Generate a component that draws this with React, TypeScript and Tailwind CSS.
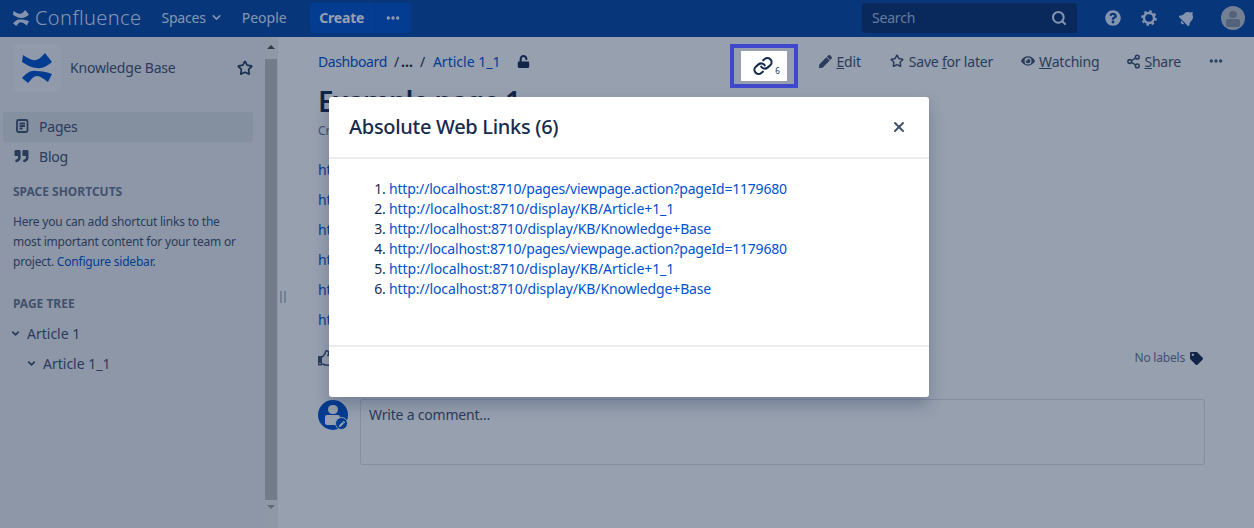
import { ChevronDown, Ellipsis, Link, Search, Share2, Star, X } from "lucide-react";
import { FaBell, FaEye, FaPen, FaQuestionCircle, FaQuoteRight, FaRegThumbsUp, FaTag, FaUnlock } from "react-icons/fa";

const font = "font-['Noto_Sans',sans-serif]";

const links = [
  { href: "http://localhost:8710/pages/viewpage.action?pageId=1179680", fit: "tracking-[-0.2px]" },
  { href: "http://localhost:8710/display/KB/Article+1_1", fit: "tracking-[-0.06px]" },
  { href: "http://localhost:8710/display/KB/Knowledge+Base", fit: "tracking-[-0.14px]" },
  { href: "http://localhost:8710/pages/viewpage.action?pageId=1179680", fit: "tracking-[-0.2px]" },
  { href: "http://localhost:8710/display/KB/Article+1_1", fit: "tracking-[-0.06px]" },
  { href: "http://localhost:8710/display/KB/Knowledge+Base", fit: "tracking-[-0.14px]" },
];

const Logo = ({ className }: { className: string }) => (
  <svg viewBox="0 0 30 30" className={className} fill="currentColor">
    <path d="M1 2C6 5 10 8 14 7C18 6 20 3 23 0L30 9C25 13 20 16 15 15C10 15 5 12 0 9Z" />
    <path d="M0 25C4 21 8 17 14 18C20 18 25 19 30 21L26 29C22 26 18 23 15 23C11 23 9 27 6 30Z" />
  </svg>
);

const PageIcon = () => (
  <svg viewBox="0 0 16 16" className="h-[16px] w-[16px]" fill="none" stroke="currentColor" strokeWidth="1.8">
    <rect x="3" y="2" width="10.500" height="12" rx="1.500" />
    <path d="M5.500 5.500h5.500M5.500 8h5.500M5.500 10.500h3" />
  </svg>
);

const GearIcon = () => (
  <svg viewBox="0 0 16 16" className="h-[16px] w-[16px]" fill="none" stroke="currentColor">
    <circle cx="8" cy="8" r="5" strokeWidth="2.400" />
    <circle cx="8" cy="8" r="6.800" strokeWidth="2" strokeDasharray="2.600 2.740" />
  </svg>
);

const Avatar = () => (
  <div className="relative h-[24px] w-[24px] overflow-hidden rounded-full bg-[#c1c7d0]">
    <div className="absolute left-[8px] top-[5px] h-[7px] w-[8px] rounded-full bg-[#8993a4]" />
    <div className="absolute left-[5px] top-[13px] h-[8px] w-[14px] rounded-[2px] bg-[#8993a4]" />
  </div>
);

const ToolbarItem = ({ icon, before, key_, after, className }: { icon: React.ReactNode; before?: string; key_: string; after: string; className: string }) => (
  <div className={`flex items-center text-[14px] text-[#42526e] ${className}`}>
    {icon}
    <span>
      {before}
      <span className="underline">{key_}</span>
      {after}
    </span>
  </div>
);

const TopBar = () => (
  <header className="flex h-[37px] shrink-0 items-center bg-[#0747a6] pb-[2px] pl-[13px] pr-[9px] text-[#deebff]">
    <Logo className="h-[16px] w-[16px]" />
    <span className="ml-[6px] text-[20px] font-light tracking-[0.4px]">Confluence</span>
    <span className="ml-[20px] flex items-center gap-[4px] text-[14px]">
      Spaces <ChevronDown className="h-[13px] w-[13px]" strokeWidth={3} />
    </span>
    <span className="ml-[19px] text-[14px] tracking-normal">People</span>
    <div className="ml-[23px] flex h-[30px] overflow-hidden rounded-[3px] bg-[#0052cc] text-white">
      <div className="flex w-[65px] items-center justify-center border-r border-[#0747a6] text-[14px] font-bold">Create</div>
      <div className="flex w-[36px] items-center justify-center">
        <Ellipsis className="h-[16px] w-[16px]" strokeWidth={3} />
      </div>
    </div>
    <div className="ml-auto flex h-[30px] w-[215px] items-center justify-between rounded-[3px] bg-[#09326f] px-[10px] text-[14px] text-[#a8bee0]">
      Search <Search className="h-[16px] w-[16px] text-[#deebff]" strokeWidth={3} />
    </div>
    <div className="ml-[28px] flex items-center gap-[20px]">
      <FaQuestionCircle className="h-[16px] w-[16px]" />
      <GearIcon />
      <FaBell className="ml-[2px] h-[16px] w-[16px] rotate-45" />
      <div className="ml-[6px]">
        <Avatar />
      </div>
    </div>
  </header>
);

const Sidebar = () => (
  <aside className="flex w-[278px] shrink-0 bg-[#eef0f3]">
    <div className="w-[265px] shrink-0 pt-[7px] text-[#42526e]">
      <div className="flex items-center pl-[13px] pr-[12px]">
        <div className="flex h-[48px] w-[48px] items-center justify-center rounded-[3px] bg-[#f4f5f7] text-[#0052cc]">
          <Logo className="h-[30px] w-[30px]" />
        </div>
        <span className="mb-[2px] ml-[9px] text-[14px]">Knowledge Base</span>
        <Star className="ml-auto h-[16px] w-[16px] text-[#253858]" strokeWidth={2.500} />
      </div>
      <div className="ml-[3px] mt-[20px] flex h-[30px] w-[250px] items-center gap-[9px] rounded-[3px] bg-[#dfe1e6] pb-[2px] pl-[11px] text-[14px]">
        <PageIcon /> Pages
      </div>
      <div className="ml-[3px] flex h-[30px] w-[250px] items-center gap-[10px] pb-[2px] pl-[11px] text-[14px]">
        <FaQuoteRight className="h-[14px] w-[15px]" /> Blog
      </div>
      <h3 className="ml-[13px] mt-[10px] text-[12px] font-bold leading-[20px] tracking-normal text-[#6b778c]">SPACE SHORTCUTS</h3>
      <p className="ml-[13px] mt-[10px] w-[232px] text-[12px] leading-[20px]">
        Here you can add shortcut links to the most important content for your team or project.{" "}
        <span className="text-[#0052cc]">Configure sidebar.</span>
      </p>
      <h3 className="ml-[13px] mt-[22px] text-[12px] font-bold leading-[20px] tracking-normal text-[#6b778c]">PAGE TREE</h3>
      <div className="ml-[10px] mt-[5px] flex h-[30px] items-center gap-[6px] pb-[2px] text-[14px] tracking-normal">
        <ChevronDown className="h-[11px] w-[11px]" strokeWidth={4} /> Article 1
      </div>
      <div className="ml-[26px] flex h-[30px] items-center gap-[6px] pb-[2px] text-[14px] tracking-normal">
        <ChevronDown className="h-[11px] w-[11px]" strokeWidth={4} /> Article 1_1
      </div>
    </div>
    <div className="flex w-[12px] shrink-0 flex-col items-center bg-[#f1f1f1]">
      <div className="mt-[8px] h-0 w-0 border-x-[4px] border-b-[4px] border-x-transparent border-b-[#505050]" />
      <div className="mt-[10px] h-[441px] w-full bg-[#c1c1c1]" />
      <div className="mt-[5px] h-0 w-0 border-x-[4px] border-t-[4px] border-x-transparent border-t-[#a0a0a0]" />
    </div>
  </aside>
);

const PageContent = () => (
  <main className="min-w-0 flex-1 bg-white pl-[40px] pr-[49px] pt-[7px] text-[#172b4d]">
    <div className="-mr-[19px] flex h-[44px] items-center">
      <div className="flex items-center pb-[10px] text-[14px] text-[#0052cc]">
        <span className="tracking-[-0.4px]">Dashboard</span>
        <span className="ml-[7px] text-[#172b4d]">/<b className="ml-[2px] tracking-[1px]">…</b></span>
        <span className="ml-[6px] text-[#172b4d]">/</span>
        <span className="ml-[8px] tracking-normal">Article 1_1</span>
        <FaUnlock className="ml-[17px] h-[13px] w-[13px] text-[#172b4d]" />
      </div>
      <div className="relative z-20 ml-auto mr-[21px] flex h-[44px] w-[68px] items-center justify-center border-4 border-[#3f48cc] bg-[#979fae]">
        <div className="flex h-[30px] w-[46px] items-center justify-center bg-white pl-[4px]">
          <Link className="h-[20px] w-[20px] rotate-[4deg] text-[#172b4d]" strokeWidth={2.500} />
          <span className="ml-[2px] mt-[9px] text-[8px] text-[#172b4d]">6</span>
        </div>
      </div>
      <div className="flex items-center pb-[10px]">
        <ToolbarItem className="mr-[29px] gap-[4px]" icon={<FaPen className="h-[13px] w-[13px]" />} key_="E" after="dit" />
        <ToolbarItem className="mr-[28px] gap-[5px]" icon={<Star className="h-[14px] w-[14px]" strokeWidth={2.500} />} before="Save " key_="f" after="or later" />
        <ToolbarItem className="mr-[27px] gap-[4px]" icon={<FaEye className="h-[14px] w-[14px]" />} key_="W" after="atching" />
        <ToolbarItem className="mr-[27px] gap-[3px]" icon={<Share2 className="h-[15px] w-[15px]" strokeWidth={2.500} />} key_="S" after="hare" />
        <Ellipsis className="h-[16px] w-[16px] text-[#42526e]" strokeWidth={3} />
      </div>
    </div>
    <h1 className="-mt-[5px] text-[28px] font-semibold leading-[36px] tracking-[-0.9px] text-[#172b4d]">Example page 1</h1>
    <p className="mt-[4px] text-[12px] leading-[16px] text-[#6b778c]">Created by admin</p>
    <div className="mt-[16px]">
      {links.map((link, i) => (
        <div key={i} className="h-[30px] text-[14px] leading-[30px] text-[#0052cc]">
          {link.href}
        </div>
      ))}
    </div>
    <div className="mt-[14px] flex items-center justify-between">
      <FaRegThumbsUp className="h-[16px] w-[16px] text-[#42526e]" />
      <div className="mr-[2px] flex items-center gap-[5px] text-[12px] text-[#6b778c]">
        No labels <FaTag className="h-[13px] w-[13px] text-[#172b4d]" />
      </div>
    </div>
    <div className="mt-[32px] flex items-start gap-[12px]">
      <div className="relative mt-[1px] h-[30px] w-[30px] shrink-0 rounded-full bg-[#0052cc]">
        <div className="absolute left-[10px] top-[5px] h-[9px] w-[10px] rounded-full bg-white" />
        <div className="absolute left-[7px] top-[15px] h-[10px] w-[15px] rounded-[2px] bg-white" />
        <div className="absolute bottom-0 right-0 flex h-[13px] w-[13px] items-center justify-center rounded-full border border-white bg-[#0052cc]">
          <FaPen className="h-[6px] w-[6px] text-white" />
        </div>
      </div>
      <div className="h-[66px] flex-1 rounded-[3px] border border-[#dfe1e6] px-[8px] py-[4px] text-[14px] text-[#42526e]">
        Write a comment…
      </div>
    </div>
  </main>
);

const Modal = () => (
  <div className="absolute left-[329px] top-[97px] z-20 flex h-[300px] w-[600px] flex-col rounded-[3px] bg-white shadow-[0_8px_16px_rgba(9,30,66,0.25)]">
    <div className="flex h-[62px] shrink-0 items-center justify-between border-b-2 border-[#ebecf0] pl-[20px] pr-[22px]">
      <h2 className="text-[20px] font-medium tracking-[-0.3px] text-[#172b4d]">Absolute Web Links (6)</h2>
      <X className="h-[16px] w-[16px] text-[#42526e]" strokeWidth={3} />
    </div>
    <div className="flex-1 px-[20px] pt-[20px]">
      <ol className="list-decimal pl-[40px] text-[14px] leading-[20px] text-[#172b4d]">
        {links.map((link, i) => (
          <li key={i}>
            <span className={`text-[#0052cc] ${link.fit}`}>{link.href}</span>
          </li>
        ))}
      </ol>
    </div>
    <div className="h-[52px] shrink-0 border-t-2 border-[#ebecf0]" />
  </div>
);

export default function App() {
  return (
    <div className={`relative flex h-screen w-full flex-col overflow-hidden tracking-[-0.2px] ${font}`}>
      <TopBar />
      <div className="flex min-h-0 flex-1">
        <Sidebar />
        <div className="absolute left-[280px] top-[291px] h-[12px] w-[6px] border-x-2 border-[#c1c7d0]" />
        <PageContent />
      </div>
      <div className="absolute inset-0 z-10 bg-[rgba(9,30,66,0.425)]" />
      <Modal />
    </div>
  );
}
